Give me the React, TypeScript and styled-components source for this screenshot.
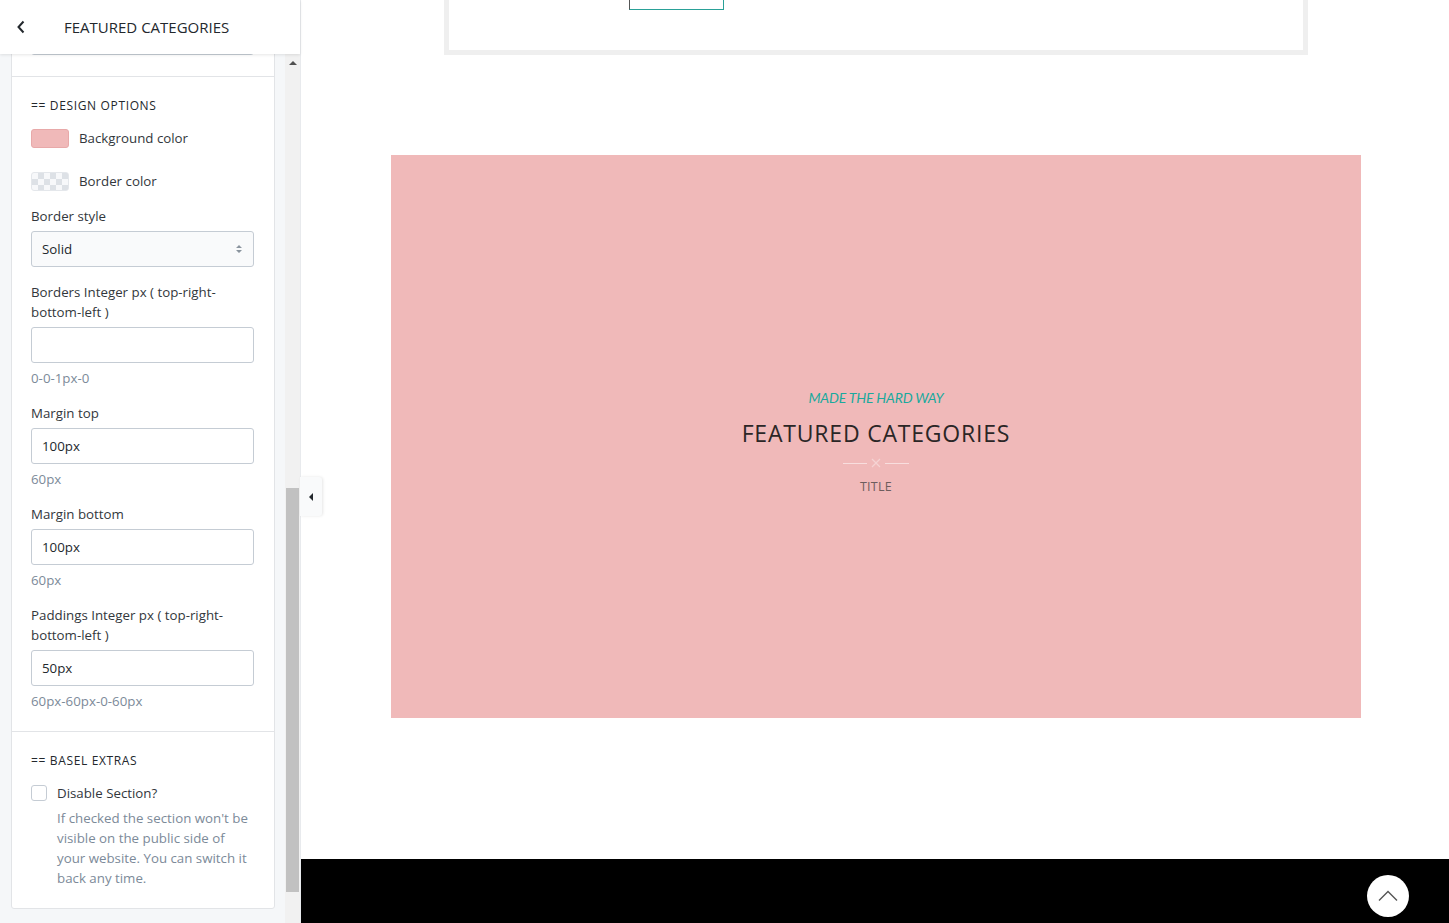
import React from "react";
import styled, { createGlobalStyle } from "styled-components";

const Global = createGlobalStyle`
  html, body { margin: 0; padding: 0; }
  body { font-family: "Open Sans", "Noto Sans", sans-serif; background: #fff; }
  * { box-sizing: border-box; }
`;

const Page = styled.div`
  display: flex;
  width: 1449px;
  height: 923px;
  overflow: hidden;
`;

const Sidebar = styled.aside`
  width: 301px;
  flex: none;
  display: flex;
  flex-direction: column;
  background: #f5f7f9;
  border-right: 1px solid #e8eaed;
  position: relative;
`;

const Header = styled.div`
  height: 54px;
  flex: none;
  display: flex;
  align-items: center;
  padding-bottom: 1px;
  background: #fff;
  box-shadow: 0 1px 3px rgba(0, 0, 0, 0.1);
  position: relative;
  z-index: 2;
`;

const BackBtn = styled.div`
  width: 42px;
  height: 40px;
  display: flex;
  align-items: center;
  justify-content: center;
  color: #23282d;
`;

const HeaderTitle = styled.div`
  margin-left: 22px;
  font-size: 15px;
  color: #23282d;
  text-transform: uppercase;
`;

const Body = styled.div`
  flex: 1;
  display: flex;
  overflow: hidden;
`;

const Scroller = styled.div`
  flex: 1;
  padding: 0 10px 0 11px;
  overflow: hidden;
`;

const ScrollTrack = styled.div`
  width: 15px;
  flex: none;
  background: #f1f1f1;
  display: flex;
  flex-direction: column;
  align-items: center;
`;

const ScrollArrow = styled.div`
  width: 0;
  height: 0;
  margin-top: 7px;
  border-left: 4px solid transparent;
  border-right: 4px solid transparent;
  border-bottom: 4px solid #505050;
`;

const ScrollThumb = styled.div`
  width: 13px;
  margin-top: 423px;
  height: 404px;
  background: #c1c1c1;
`;

const Card = styled.div`
  margin-top: -41px;
  background: #fff;
  border: 1px solid #e2e4e7;
  border-radius: 0 0 3px 3px;
  color: #32373c;
  font-size: 13.3px;
  line-height: 20px;
`;

const Section = styled.div<{ $last?: boolean }>`
  padding: 18px 20px 20px 19px;
  border-bottom: ${(p) => (p.$last ? "none" : "1px solid #e2e4e7")};
  display: flex;
  flex-direction: column;
`;

const TopSection = styled.div`
  padding: 0 20px 21px 19px;
  border-bottom: 1px solid #e2e4e7;
`;

const SectionHead = styled.div`
  font-size: 12px;
  letter-spacing: 0.65px;
  color: #23282d;
  text-transform: uppercase;
  line-height: 20px;
  margin-top: 1px;
`;

const ColorRow = styled.div<{ $mt: number }>`
  display: flex;
  align-items: center;
  height: 20px;
  margin-top: ${(p) => p.$mt}px;
  gap: 10px;
`;

const Swatch = styled.div<{ $checker?: boolean; $color?: string }>`
  width: 38px;
  height: 19px;
  border-radius: 3px;
  border: 1px solid ${(p) => (p.$checker ? "#e4e7eb" : "#e8a9a9")};
  background: ${(p) =>
    p.$checker
      ? "repeating-conic-gradient(#dde1e6 0% 25%, #f7f8fa 0% 50%) 0 0 / 12px 12px"
      : p.$color};
`;

const Field = styled.div`
  display: flex;
  flex-direction: column;
  margin-top: 15px;
`;

const Label = styled.label`
  color: #32373c;
  padding-right: 20px;
`;

const InputBox = styled.div`
  margin-top: 5px;
  height: 36px;
  border: 1px solid #c5ccd4;
  border-radius: 3px;
  display: flex;
  align-items: center;
  padding: 0 10px;
  color: #23282d;
  background: #fff;
  justify-content: space-between;
`;

const SelectBox = styled(InputBox)`
  background: #f9fafb;
`;

const Hint = styled.div`
  margin-top: 5px;
  color: #7c8a99;
`;

const CheckRow = styled.div`
  display: flex;
  align-items: center;
  gap: 10px;
  margin-top: 12px;
`;

const CheckBox = styled.div`
  width: 16px;
  height: 16px;
  border: 1px solid #c5ccd4;
  border-radius: 3px;
  background: #fff;
`;

const Desc = styled.div`
  margin-left: 26px;
  margin-top: 5px;
  color: #7c8a99;
`;

const Toggle = styled.div`
  position: absolute;
  left: 300px;
  top: 477px;
  width: 22px;
  height: 39px;
  background: #f9fafb;
  border-radius: 0 3px 3px 0;
  box-shadow: 1px 0 3px rgba(0, 0, 0, 0.1);
  display: flex;
  align-items: center;
  justify-content: center;
  z-index: 3;
`;

const LeftTri = styled.div`
  width: 0;
  height: 0;
  border-top: 4px solid transparent;
  border-bottom: 4px solid transparent;
  border-right: 4px solid #23282d;
`;

const Main = styled.main`
  flex: 1;
  display: flex;
  flex-direction: column;
  align-items: center;
  padding-left: 2px;
  position: relative;
  background: #fff;
`;

const TopBox = styled.div`
  width: 864px;
  height: 55px;
  border: 5px solid #efefef;
  border-top: none;
  flex: none;
  padding-left: 180px;
`;

const GhostBtn = styled.div`
  width: 95px;
  height: 10px;
  border: 1px solid #555;
  border-top: none;
  border-bottom-color: #2aa198;
  border-right-color: #2aa198;
`;

const Promo = styled.section`
  margin-top: 100px;
  width: 970px;
  height: 563px;
  flex: none;
  background: #f0b9b9;
  display: flex;
  flex-direction: column;
  align-items: center;
  justify-content: center;
  padding-top: 10px;
  font-family: Lato, "Open Sans", sans-serif;
`;

const Subtitle = styled.div`
  font-style: italic;
  font-size: 14px;
  color: #1ba99d;
  line-height: 20px;
  letter-spacing: -0.2px;
`;

const Title = styled.h2`
  margin: 12px 0 0;
  font-weight: 400;
  font-size: 23px;
  letter-spacing: 0.8px;
  line-height: 26px;
  color: #2b2626;
  font-family: "Open Sans", Lato, sans-serif;
`;

const Sep = styled.div`
  display: flex;
  align-items: center;
  gap: 4px;
  margin-top: 11px;
  height: 12px;
`;

const SepLine = styled.div`
  width: 24px;
  height: 1px;
  background: #f8dede;
`;

const Small = styled.div`
  margin-top: 9px;
  font-size: 12.5px;
  color: #6d5d5d;
  letter-spacing: 0.3px;
  font-family: "Open Sans", sans-serif;
`;

const Footer = styled.footer`
  position: absolute;
  left: 0;
  right: 0;
  bottom: 0;
  height: 64px;
  background: #000;
`;

const TopBtn = styled.div`
  position: absolute;
  right: 40px;
  top: 16px;
  width: 42px;
  height: 42px;
  border-radius: 50%;
  background: #fff;
  display: flex;
  align-items: center;
  justify-content: center;
`;

const fields = [
  { label: "Margin top", value: "100px", hint: "60px" },
  { label: "Margin bottom", value: "100px", hint: "60px" },
  { label: "Paddings Integer px ( top-right-bottom-left )", value: "50px", hint: "60px-60px-0-60px" },
];

export default function App() {
  return (
    <>
      <Global />
      <Page>
        <Sidebar>
          <Header>
            <BackBtn>
              <svg width="10" height="14" viewBox="0 0 10 14">
                <path d="M7.5 1.5 L2.5 7 L7.5 12.5" stroke="#23282d" strokeWidth="2" fill="none" />
              </svg>
            </BackBtn>
            <HeaderTitle>Featured Categories</HeaderTitle>
          </Header>
          <Body>
            <Scroller>
              <Card>
                <TopSection>
                  <InputBox />
                </TopSection>
                <Section>
                  <SectionHead>== Design Options</SectionHead>
                  <ColorRow $mt={12}>
                    <Swatch $color="#f0b9b9" />
                    Background color
                  </ColorRow>
                  <ColorRow $mt={23}>
                    <Swatch $checker />
                    Border color
                  </ColorRow>
                  <Field>
                    <Label>Border style</Label>
                    <SelectBox>
                      Solid
                      <svg width="8" height="12" viewBox="0 0 8 12">
                        <path d="M1 5 L4 2 L7 5 Z M1 7 L4 10 L7 7 Z" fill="#8a949e" />
                      </svg>
                    </SelectBox>
                  </Field>
                  <Field>
                    <Label>Borders Integer px ( top-right-bottom-left )</Label>
                    <InputBox />
                    <Hint>0-0-1px-0</Hint>
                  </Field>
                  {fields.map((f) => (
                    <Field key={f.label}>
                      <Label>{f.label}</Label>
                      <InputBox>{f.value}</InputBox>
                      <Hint>{f.hint}</Hint>
                    </Field>
                  ))}
                </Section>
                <Section $last>
                  <SectionHead>== Basel Extras</SectionHead>
                  <CheckRow>
                    <CheckBox />
                    Disable Section?
                  </CheckRow>
                  <Desc>
                    If checked the section won't be visible on the public side of your website. You can
                    switch it back any time.
                  </Desc>
                </Section>
              </Card>
            </Scroller>
            <ScrollTrack>
              <ScrollArrow />
              <ScrollThumb />
            </ScrollTrack>
          </Body>
          <Toggle>
            <LeftTri />
          </Toggle>
        </Sidebar>
        <Main>
          <TopBox>
            <GhostBtn />
          </TopBox>
          <Promo>
            <Subtitle>MADE THE HARD WAY</Subtitle>
            <Title>FEATURED CATEGORIES</Title>
            <Sep>
              <SepLine />
              <svg width="10" height="10" viewBox="0 0 10 10">
                <path d="M1 1 L9 9 M9 1 L1 9" stroke="#f5d3d3" strokeWidth="1.2" />
              </svg>
              <SepLine />
            </Sep>
            <Small>TITLE</Small>
          </Promo>
          <Footer>
            <TopBtn>
              <svg width="20" height="12" viewBox="0 0 20 12">
                <path d="M1 10.5 L10 1.5 L19 10.5" stroke="#555" strokeWidth="1.4" fill="none" />
              </svg>
            </TopBtn>
          </Footer>
        </Main>
      </Page>
    </>
  );
}
